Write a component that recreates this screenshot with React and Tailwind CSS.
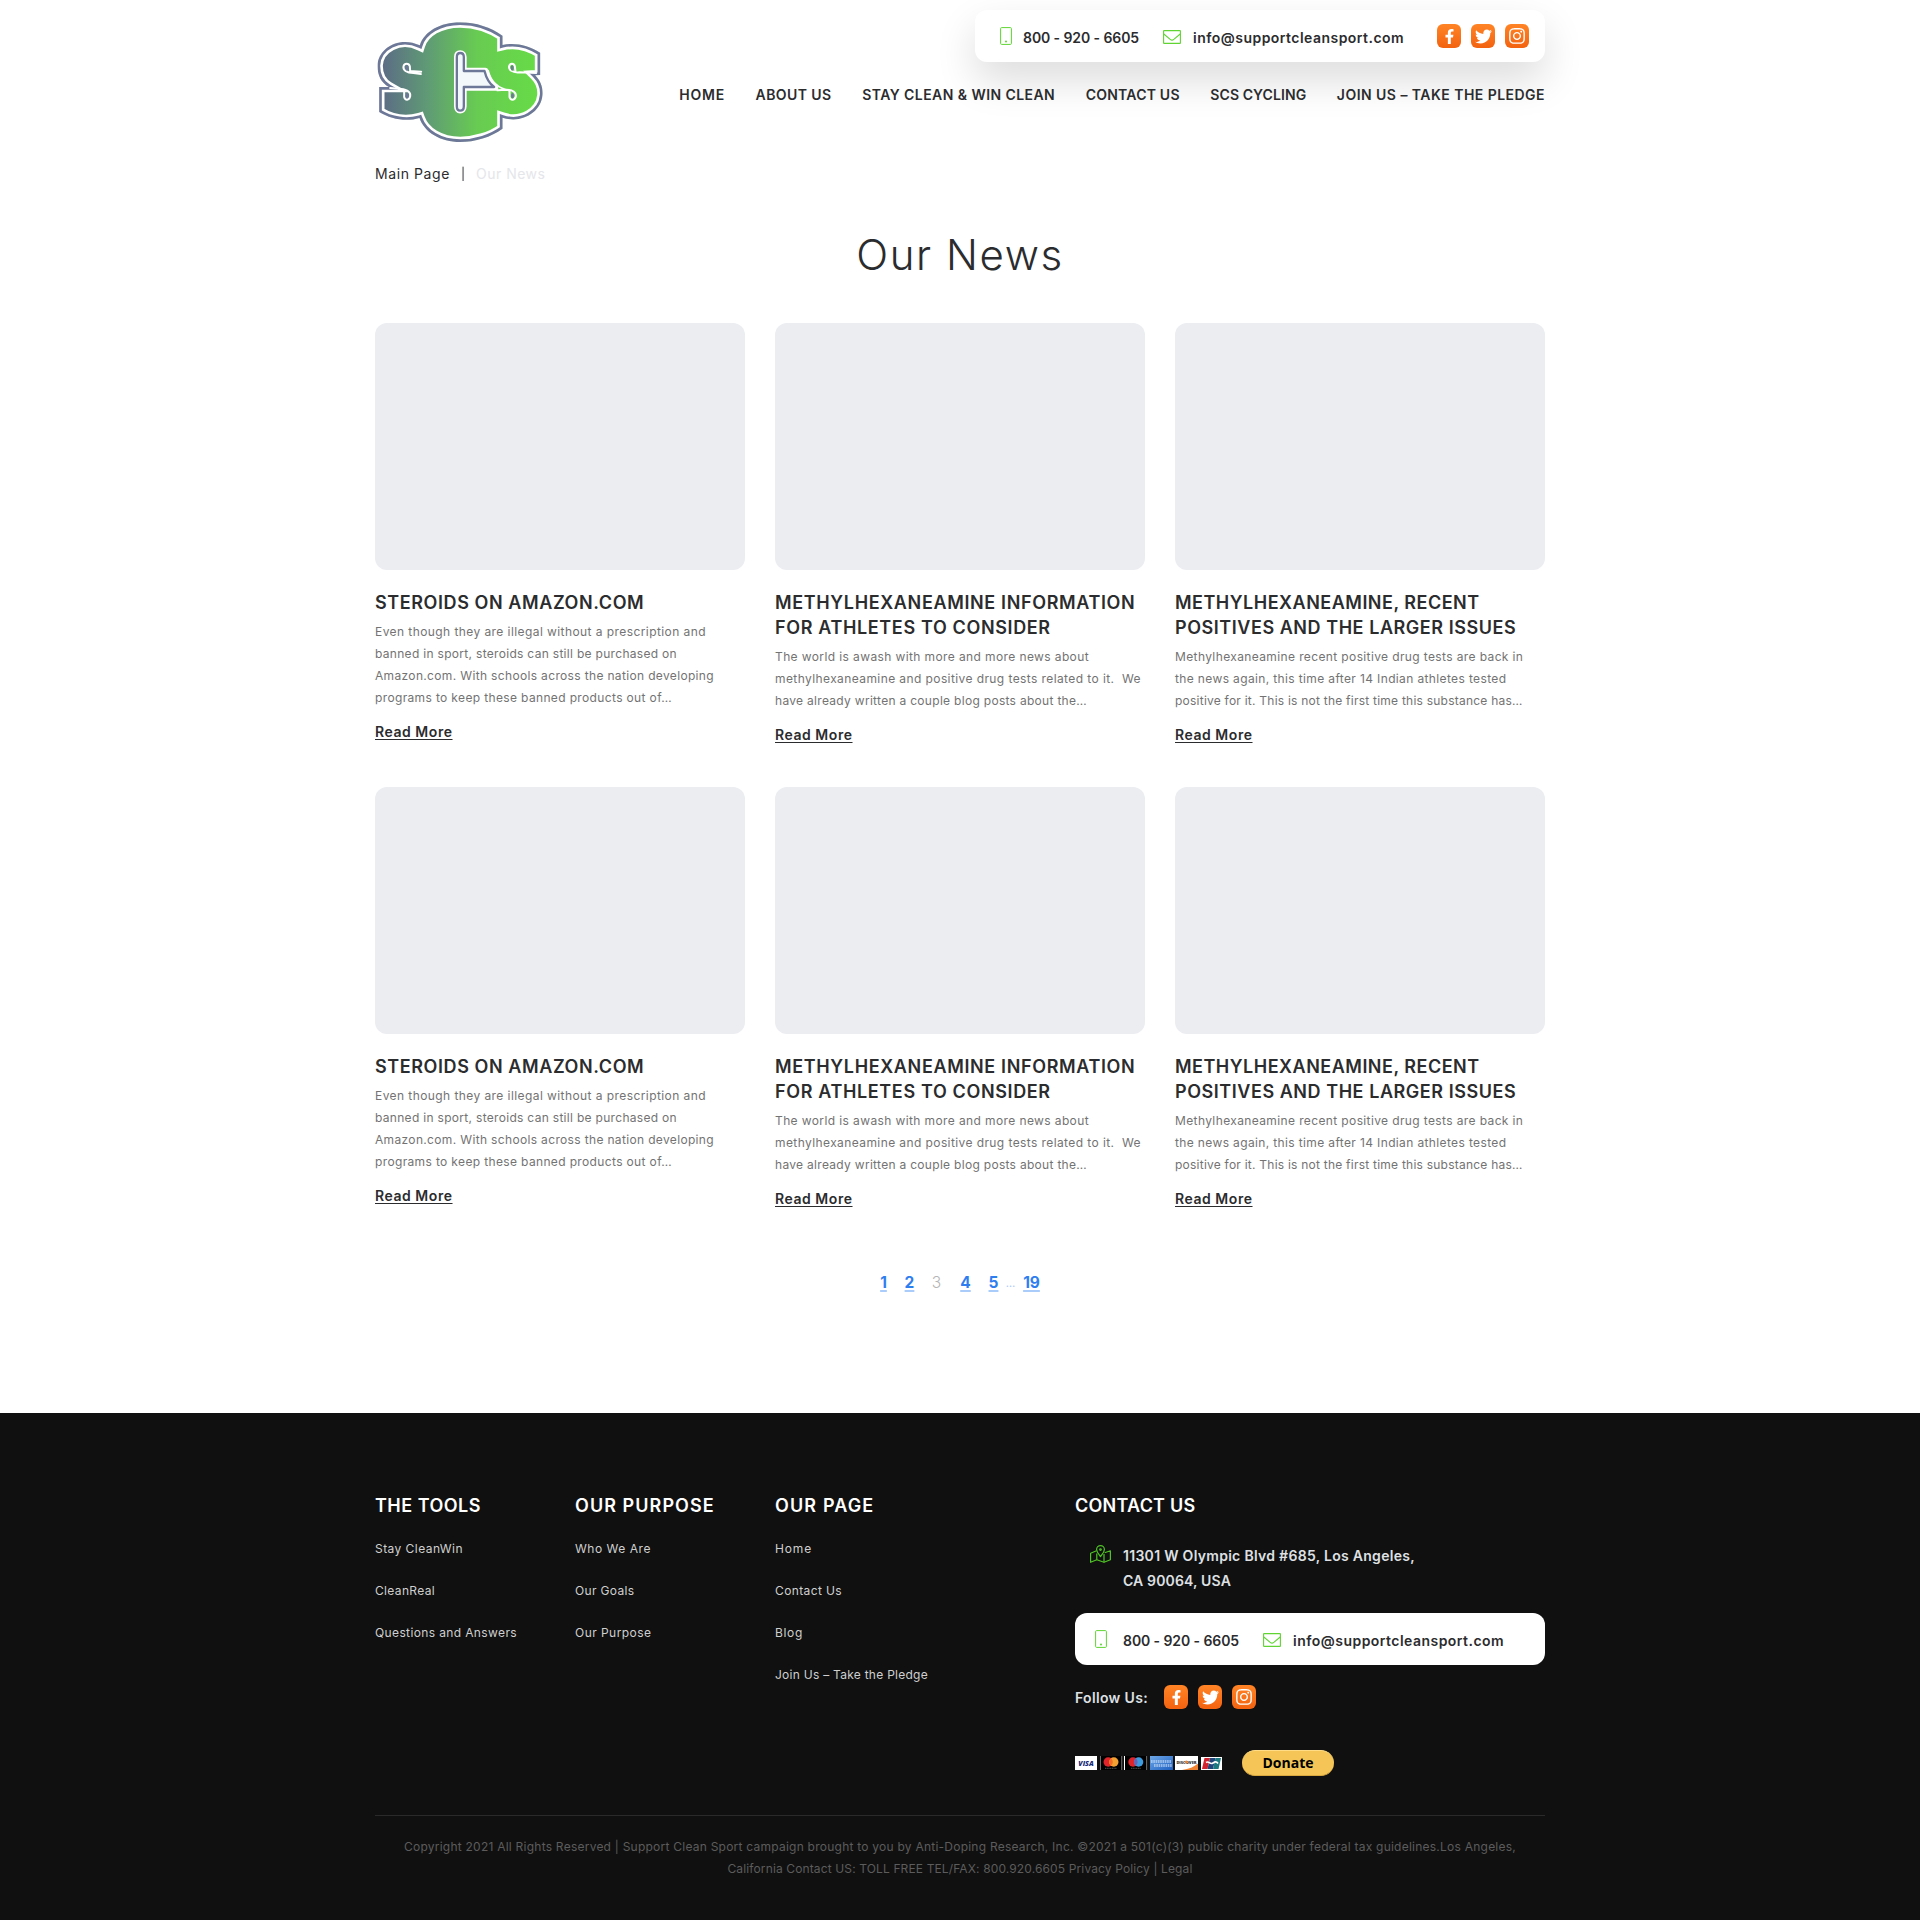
import { FaFacebookF, FaTwitter, FaInstagram } from "react-icons/fa";

const OUTLINE =
  "M165 105 C178 64 226 36 286 36 C334 36 378 52 413 76 L413 104 C450 95 491 105 526 127 L526 194 L511 195 C528 212 535 232 533 255 C528 307 470 341 413 322 L413 355 C380 380 330 395 286 395 C226 395 179 366 164 323 C124 335 79 327 43 305 L43 230 L72 230 C48 216 38 194 38 166 C40 112 104 76 165 105 Z";

function Logo() {
  return (
    <svg viewBox="37 35 500 360" className="h-[120px] w-[167px]" aria-label="SCS">
      <defs>
        <linearGradient id="logoFill" x1="0" x2="1" y1="0" y2="0">
          <stop offset="0.03" stopColor="#5c6c85" />
          <stop offset="0.3" stopColor="#5f9a75" />
          <stop offset="0.6" stopColor="#68cb52" />
          <stop offset="1" stopColor="#67dd46" />
        </linearGradient>
        <clipPath id="logoClip">
          <path d={OUTLINE} />
        </clipPath>
      </defs>
      <g clipPath="url(#logoClip)">
        <path d={OUTLINE} fill="url(#logoFill)" />
        <path d={OUTLINE} fill="none" stroke="#fff" strokeWidth="32" />
        <path d={OUTLINE} fill="none" stroke="#6d7797" strokeWidth="16" />
      </g>
      {/* counter and arm of the C */}
      <path
        d="M286 128 C279 128 276 133 276 140 L276 288 C276 296 280 301 286 301 C292 301 297 296 297 288 L297 233 L392 233 C376 220 368 202 362 181 L297 181 L297 140 C297 133 293 128 286 128 Z"
        fill="#fff" stroke="#fff" strokeWidth="17" strokeLinejoin="round"
      />
      <path
        d="M286 128 C279 128 276 133 276 140 L276 288 C276 296 280 301 286 301 C292 301 297 296 297 288 L297 230 L388 230 C372 219 364 202 359 182 L297 182 L297 140 C297 133 293 128 286 128 Z"
        fill="#f3f8fb" stroke="#6d7797" strokeWidth="7" strokeLinejoin="round"
      />
      {/* counters of both letters S */}
      <g fill="none" stroke="#fff" strokeLinecap="round" strokeLinejoin="round">
        <path d="M168 191 L146 188 C124 188 114 178 116 168 C119 158 132 158 135 168 L136 182 L169 184" strokeWidth="6" />
        <path d="M76 233 L108 236 C130 238 138 246 136 258 C133 271 121 271 118 260 L118 244" strokeWidth="6" />
        <path d="M514 188 L464 186 C442 188 430 178 433 167 C436 158 447 158 450 168 L452 184" strokeWidth="6" />
        <path d="M398 240 L424 238 C446 238 455 247 453 259 C449 271 437 271 434 260 L434 243" strokeWidth="6" />
        <path d="M370 181 C378 214 400 234 434 241" strokeWidth="5" />
      </g>
      <g fill="#6d7797">
        <ellipse cx="126" cy="173" rx="4.5" ry="8" />
        <ellipse cx="127" cy="256" rx="4.5" ry="8" />
        <ellipse cx="442" cy="173" rx="4.5" ry="8" />
        <ellipse cx="443" cy="256" rx="4.5" ry="8" />
      </g>
    </svg>
  );
}

function PhoneIcon() {
  return (
    <svg viewBox="0 0 12 18" className="h-[18px] w-3" fill="none" stroke="#5fd432" strokeWidth="1">
      <rect x="0.6" y="0.6" width="10.8" height="16.8" rx="1" />
      <circle cx="6" cy="14.6" r="1" fill="#5fd432" stroke="none" />
    </svg>
  );
}

function MailIcon() {
  return (
    <svg viewBox="0 0 18 14" className="h-3.5 w-[18px]" fill="none" stroke="#5fd432" strokeWidth="1.1" strokeLinejoin="round">
      <rect x="0.6" y="0.6" width="16.8" height="12.8" rx="0.5" />
      <path d="M0.8 4 L7.2 9.4 C8.3 10.3 9.7 10.3 10.8 9.4 L17.2 4" />
    </svg>
  );
}

function MapIcon() {
  return (
    <svg viewBox="0 0 21 18" className="h-[18px] w-[21px]" fill="none" stroke="#4fc424" strokeWidth="1.2" strokeLinejoin="round">
      <path d="M6.5 5.8 L0.6 8.2 V17.3 L6.8 14.8 L14 17.3 L20.4 14.8 V5.8 L14.6 7.8" />
      <path d="M6.8 8.5 V14.8 M14 9 V17.3" />
      <path d="M10.5 11.6 C8.5 8.8 6.6 7 6.6 4.5 A3.9 3.9 0 0 1 14.4 4.5 C14.4 7 12.5 8.8 10.5 11.6 Z" />
      <circle cx="10.5" cy="4.6" r="0.8" />
    </svg>
  );
}

function Socials() {
  const box = "flex size-6 items-center justify-center rounded-md bg-linear-to-b from-[#ff8425] to-[#f3620f] text-white";
  return (
    <div className="flex gap-2.5">
      <a className={box}><FaFacebookF size={15} /></a>
      <a className={box}><FaTwitter size={17} /></a>
      <a className={box}><FaInstagram size={18} /></a>
    </div>
  );
}

function ContactDetails({ phoneGap }) {
  return (
    <>
      <PhoneIcon />
      <span className={`${phoneGap} pt-[3px] tracking-[-0.006em]`}>800 - 920 - 6605</span>
      <span className="ml-6 pt-0.5"><MailIcon /></span>
      <span className="ml-3 pt-[3px] tracking-[0.033em]">info@supportcleansport.com</span>
    </>
  );
}

const NAV = [
  ["HOME", "tracking-[0.058em]"],
  ["ABOUT US", "tracking-[0.03em]"],
  ["STAY CLEAN & WIN CLEAN", "tracking-[0.031em]"],
  ["CONTACT US", "tracking-[0.015em]"],
  ["SCS CYCLING", "tracking-[0.006em]"],
  ["JOIN US – TAKE THE PLEDGE", "tracking-[0.033em]"],
];

const POSTS = [
  {
    title: [["STEROIDS ON AMAZON.COM", "tracking-[0.0325em]"]],
    body: [
      ["Even though they are illegal without a prescription and", "tracking-[0.0353em]"],
      ["banned in sport, steroids can still be purchased on", "tracking-[0.0254em]"],
      ["Amazon.com. With schools across the nation developing", "tracking-[0.0286em]"],
      ["programs to keep these banned products out of…", "tracking-[0.0298em]"],
    ],
  },
  {
    title: [
      ["METHYLHEXANEAMINE INFORMATION", "tracking-[0.0355em]"],
      ["FOR ATHLETES TO CONSIDER", "tracking-[0.0355em]"],
    ],
    body: [
      ["The world is awash with more and more news about", "tracking-[0.0326em]"],
      ["methylhexaneamine and positive drug tests related to it.\u00a0 We", "tracking-[0.034em]"],
      ["have already written a couple blog posts about the…", "tracking-[0.0249em]"],
    ],
  },
  {
    title: [
      ["METHYLHEXANEAMINE, RECENT", "tracking-[0.0275em]"],
      ["POSITIVES AND THE LARGER ISSUES", "tracking-[0.0305em]"],
    ],
    body: [
      ["Methylhexaneamine recent positive drug tests are back in", "tracking-[0.0315em]"],
      ["the news again, this time after 14 Indian athletes tested", "tracking-[0.0305em]"],
      ["positive for it. This is not the first time this substance has…", "tracking-[0.0195em]"],
    ],
  },
];

function Post({ post }) {
  return (
    <article>
      <div className="h-[247px] rounded-xl bg-[#ecedf1]" />
      <h2 className="mt-5 text-lg leading-[25px] font-semibold">
        {post.title.map(([t, c]) => <span key={t} className={`block ${c}`}>{t}</span>)}
      </h2>
      <p className="mt-1.5 text-xs leading-[22px] text-[#737373]">
        {post.body.map(([t, c]) => <span key={t} className={`block ${c}`}>{t}</span>)}
      </p>
      <a className="mt-[13px] block text-sm leading-5 font-semibold tracking-[0.0386em] underline decoration-1 underline-offset-2">Read More</a>
    </article>
  );
}

const COLUMNS = [
  ["THE TOOLS", "tracking-[0.0265em]", [
    ["Stay CleanWin", "tracking-[0.0372em]"],
    ["CleanReal", "tracking-[0.0285em]"],
    ["Questions and Answers", "tracking-[0.0312em]"],
  ]],
  ["OUR PURPOSE", "tracking-[0.059em]", [
    ["Who We Are", "tracking-[0.0444em]"],
    ["Our Goals", "tracking-[0.0285em]"],
    ["Our Purpose", "tracking-[0.0378em]"],
  ]],
  ["OUR PAGE", "tracking-[0.063em]", [
    ["Home", "tracking-[0.07em]"],
    ["Contact Us", "tracking-[0.0316em]"],
    ["Blog", "tracking-[0.056em]"],
    ["Join Us – Take the Pledge", "tracking-[0.022em]"],
  ]],
];

function PaymentCards() {
  return (
    <svg viewBox="0 0 147 14" className="h-3.5 w-[147px]">
      <defs>
        <linearGradient id="amex" x1="0" x2="1" y1="0" y2="1">
          <stop offset="0" stopColor="#6fa8e8" />
          <stop offset="1" stopColor="#1d5fc0" />
        </linearGradient>
      </defs>
      <rect width="22" height="14" fill="#fff" />
      <text x="11" y="9.6" textAnchor="middle" fontSize="7" fontWeight="800" fontStyle="italic" fill="#1b2a78" fontFamily="Open Sans, sans-serif">VISA</text>

      <rect x="25" width="22" height="14" fill="#000" />
      <path d="M25.5 0V14M46.7 0V14" stroke="#8a8a8a" strokeWidth="0.8" />
      <circle cx="33.2" cy="6" r="4.7" fill="#e0242b" />
      <circle cx="38.8" cy="6" r="4.7" fill="#f3a033" />
      <path d="M36 2.3A4.7 4.7 0 0 1 36 9.7A4.7 4.7 0 0 1 36 2.3" fill="#f26a25" />
      <path d="M30 12.3H42" stroke="#555" strokeWidth="1" strokeDasharray="1.2 0.5" />

      <rect x="49" width="23" height="14" fill="#000" />
      <path d="M49.5 0V14" stroke="#fff" strokeWidth="1" />
      <path d="M71.6 0V14" stroke="#8a8a8a" strokeWidth="0.8" />
      <circle cx="58" cy="6" r="4.7" fill="#e0242b" />
      <circle cx="63.6" cy="6" r="4.7" fill="#3d9be0" />
      <path d="M60.8 2.3A4.7 4.7 0 0 1 60.8 9.7A4.7 4.7 0 0 1 60.8 2.3" fill="#6a63b5" />
      <path d="M56 12.3H66" stroke="#555" strokeWidth="1" strokeDasharray="1.2 0.5" />

      <rect x="75" width="23" height="14" fill="url(#amex)" />
      <path d="M76 5.4H96M79 9.6H97" stroke="#cfe3fa" strokeWidth="3" strokeDasharray="1.6 0.7" opacity="0.6" />

      <rect x="100" width="23" height="14" fill="#fff" />
      <path d="M123 7.5V14H107C114 13 119 11 123 7.5Z" fill="#ef8230" />
      <text x="111.5" y="7.6" textAnchor="middle" fontSize="4" fontWeight="800" fill="#333" fontFamily="Open Sans, sans-serif">DISCOVER</text>
      <circle cx="111.3" cy="6" r="1.5" fill="#ef8230" />

      <rect x="126" y="1" width="21" height="13" fill="#fff" />
      <path d="M129.5 2H135L132.5 13H127Z" fill="#d3212d" />
      <path d="M135 2H140.5L138 13H132.5Z" fill="#21467e" />
      <path d="M140.5 2H146L143.5 13H138Z" fill="#1b7a80" />
      <path d="M131 6.5C134 4.5 135 9 138 7S142 6 143 7.5" stroke="#fff" strokeWidth="1.6" fill="none" />
    </svg>
  );
}

export default function App() {
  const page = "underline decoration-[#a9ccfb] decoration-2 underline-offset-2";
  return (
    <div className="min-h-[1920px] bg-white font-['Inter',sans-serif] whitespace-nowrap text-[#2b2c2e]">
      <div className="mx-auto w-[1170px]">
        <header className="flex h-[142px] justify-between">
          <div className="pt-[22px] pl-[2px]"><Logo /></div>
          <div className="flex flex-col items-end pt-2.5">
            <div className="flex h-[52px] w-[570px] items-center rounded-xl bg-white pr-4 pl-[25px] text-sm font-semibold shadow-[0_18px_40px_rgba(0,0,0,0.14)]">
              <ContactDetails phoneGap="ml-[11px]" />
              <div className="ml-auto"><Socials /></div>
            </div>
            <nav className="relative mt-[22px] flex gap-[30.6px] text-sm leading-[21px] font-semibold">
              {NAV.map(([t, c]) => <a key={t} className={c}>{t}</a>)}
            </nav>
          </div>
        </header>

        <div className="mt-[22px] flex text-sm leading-5">
          <a className="w-[86px] tracking-[0.042em]">Main Page</a>
          <span className="text-xs leading-5">|</span>
          <span className="ml-[11px] tracking-[0.035em] text-[#e5e6ea]">Our News</span>
        </div>

        <h1 className="mt-[46px] text-center text-[42px] leading-[49px] font-light tracking-[0.037em]">Our News</h1>

        <main className="mt-11 grid grid-cols-3 gap-x-[30px] gap-y-[42px]">
          {[...POSTS, ...POSTS].map((p, i) => <Post key={i} post={p} />)}
        </main>

        <div className="mt-[63px] mb-[119px] flex justify-center text-center text-[15.5px] leading-[22px] font-bold text-[#2f7ef0]">
          <a className={`w-2.5 ${page}`}>1</a>
          <a className={`ml-[15px] w-3 ${page}`}>2</a>
          <span className="ml-[15px] w-3 font-light text-[#b5b5b5]">3</span>
          <a className={`ml-[17px] w-3 ${page}`}>4</a>
          <a className={`ml-4 w-3 ${page}`}>5</a>
          <span className="ml-1.5 w-2.5 text-[11px] font-normal text-[#a9ccfb]">…</span>
          <a className={`ml-[6px] w-5 ${page}`}>19</a>
        </div>
      </div>

      <footer className="h-[507px] bg-[#101010] pt-20 text-white">
        <div className="mx-auto w-[1170px]">
          <div className="grid grid-cols-[200px_200px_300px_470px]">
            {COLUMNS.map(([title, c, links]) => (
              <div key={title}>
                <h3 className={`text-lg leading-[25px] font-semibold ${c}`}>{title}</h3>
                <div className="mt-5 flex flex-col gap-5 text-xs leading-[22px] text-[#cfcfcf]">
                  {links.map(([t, k]) => <a key={t} className={k}>{t}</a>)}
                </div>
              </div>
            ))}
            <div>
              <h3 className="text-lg leading-[25px] font-semibold tracking-[0.013em]">CONTACT US</h3>
              <div className="mt-[25px] flex pl-[15px] text-sm leading-[25px] font-semibold text-[#dfe0e4]">
                <div className="pt-0.5"><MapIcon /></div>
                <p className="ml-3">
                  <span className="block tracking-[0.0209em]">11301 W Olympic Blvd #685, Los Angeles,</span>
                  <span className="block tracking-[0.0106em]">CA 90064, USA</span>
                </p>
              </div>
              <div className="mt-5 flex h-[52px] items-center rounded-xl bg-white pl-5 text-sm font-semibold text-[#2b2c2e]">
                <ContactDetails phoneGap="ml-4" />
              </div>
              <div className="mt-5 flex h-6 items-center text-sm font-semibold text-[#dfe0e4]">
                <span className="w-[89px] pt-0.5 tracking-[0.0237em]">Follow Us:</span>
                <Socials />
              </div>
              <div className="mt-[41px] flex h-[26px] items-center">
                <PaymentCards />
                <button className="ml-5 h-[26px] w-[92px] rounded-full border-y border-t-[#ffdc85] border-b-[#d9a93f] bg-[#f5c657] font-['Open_Sans',sans-serif] text-sm leading-[24px] font-bold text-black">Donate</button>
              </div>
            </div>
          </div>
          <div className="mt-[39px] border-t border-[#2a2a2a] pt-5 text-center text-xs leading-[22px] text-[#5c5c5c]">
            <p className="tracking-[0.0198em]">Copyright 2021 All Rights Reserved | Support Clean Sport campaign brought to you by Anti-Doping Research, Inc. ©2021 a 501(c)(3) public charity under federal tax guidelines.Los Angeles,</p>
            <p className="tracking-[0.0107em]">California Contact US: TOLL FREE TEL/FAX: 800.920.6605 Privacy Policy | Legal</p>
          </div>
        </div>
      </footer>
    </div>
  );
}
